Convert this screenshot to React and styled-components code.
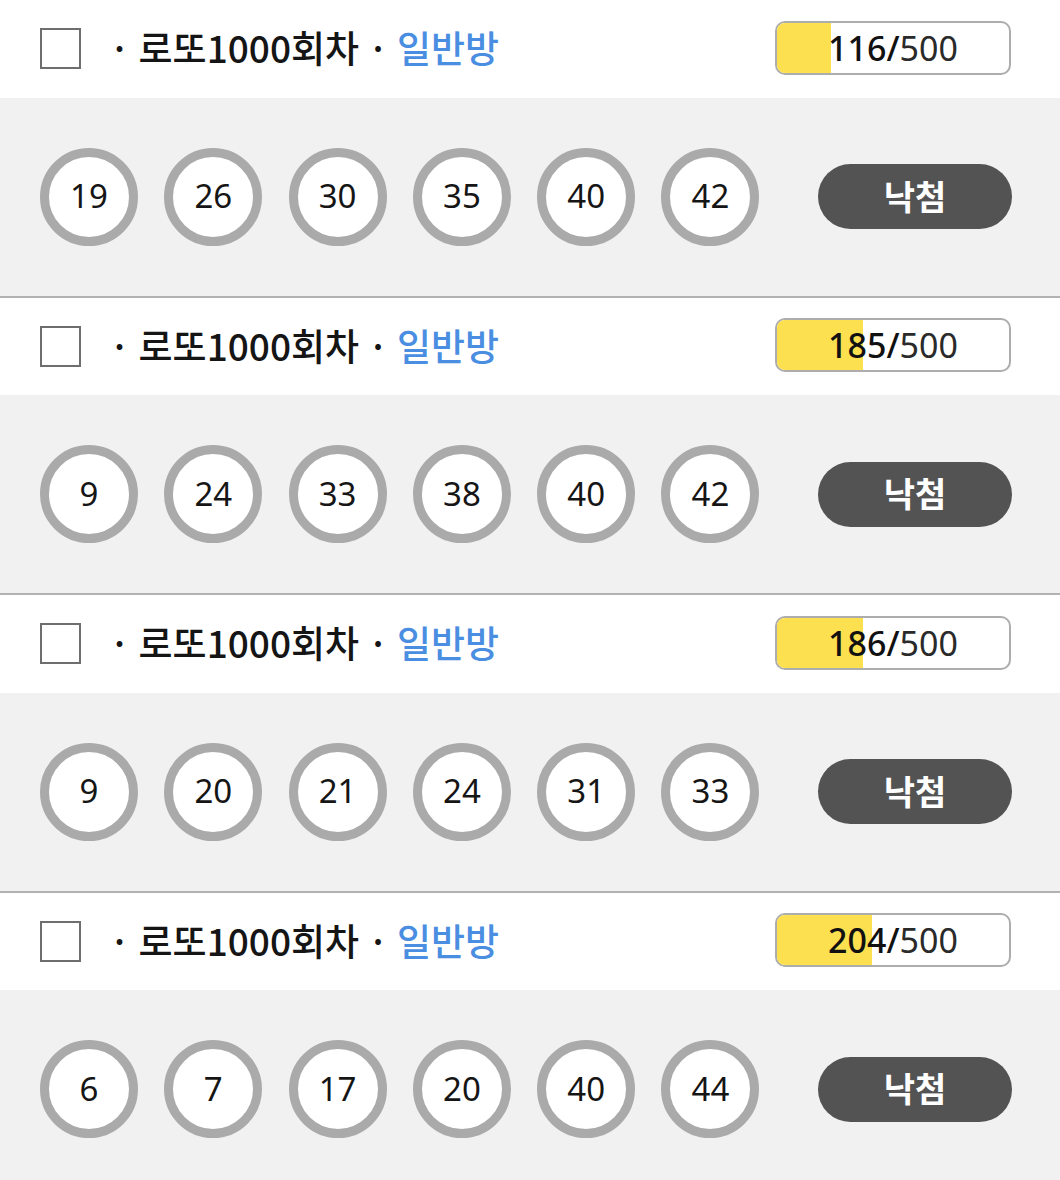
import React from 'react'
import styled, { createGlobalStyle } from 'styled-components'

const GlobalStyle = createGlobalStyle`
  html, body {
    margin: 0;
    padding: 0;
    background: #fff;
    font-family: "Noto Sans", "Noto Sans CJK KR", sans-serif;
  }
`;

const List = styled.div`
  width: 1060px;
`;

const Ticket = styled.section`
  border-bottom: 2px solid #b2b2b2;
`;

const Header = styled.div`
  height: 97.5px;
  display: flex;
  align-items: center;
  padding: 0 49px 0 40px;
  background: #fff;
`;

const Check = styled.span`
  width: 41px;
  height: 41px;
  box-sizing: border-box;
  border: 2.5px solid #6e6e6e;
  background: #fff;
  flex: none;
`;

const Title = styled.div`
  margin-left: 28px;
  margin-top: -3px;
  font-family: "Noto Sans CJK KR", "Noto Sans", sans-serif;
  font-size: 37px;
  font-weight: 500;
  color: #151515;
  white-space: nowrap;
  flex: 1;
`;

const Room = styled.span`
  color: #4a8ee2;
`;

const Gauge = styled.div`
  position: relative;
  width: 236px;
  height: 54px;
  box-sizing: border-box;
  border: 2px solid #adadad;
  border-radius: 10px;
  overflow: hidden;
  display: flex;
  align-items: center;
  justify-content: center;
  background: #fff;
  margin-top: -2px;
`;

const Fill = styled.div`
  position: absolute;
  left: 0;
  top: 0;
  bottom: 0;
  background: #fde04f;
`;

const Count = styled.span`
  position: relative;
  font-size: 34px;
  color: #111;
  font-weight: 500;
  line-height: 1;
`;

const Max = styled.span`
  font-weight: 400;
  color: #2a2a2a;
`;

const Body = styled.div`
  height: 198px;
  background: #f1f1f1;
  display: flex;
  align-items: center;
  padding: 0 48px 0 40px;
`;

const Balls = styled.div`
  display: flex;
  gap: 26.3px;
  flex: 1;
`;

const Ball = styled.div`
  width: 98px;
  height: 98px;
  box-sizing: border-box;
  border: 9px solid #aaaaaa;
  border-radius: 50%;
  background: #fff;
  display: flex;
  align-items: center;
  justify-content: center;
  font-size: 33px;
  color: #151515;
  padding-bottom: 2px;
`;

const Result = styled.button`
  width: 194px;
  height: 65px;
  border: none;
  border-radius: 33px;
  background: #535353;
  color: #fff;
  font-family: "Noto Sans CJK KR", sans-serif;
  font-size: 34px;
  font-weight: 700;
  padding: 0 0 3px;
`;

const tickets = [
  { count: 116, balls: [19, 26, 30, 35, 40, 42] },
  { count: 185, balls: [9, 24, 33, 38, 40, 42] },
  { count: 186, balls: [9, 20, 21, 24, 31, 33] },
  { count: 204, balls: [6, 7, 17, 20, 40, 44] },
];

const App = () => {
  return (
    <List>
      <GlobalStyle />
      {tickets.map((t, i) => (
        <Ticket key={i}>
          <Header>
            <Check />
            <Title>
              · 로또1000회차 · <Room>일반방</Room>
            </Title>
            <Gauge>
              <Fill style={{ width: `${(t.count / 500) * 100}%` }} />
              <Count>
                {t.count}/<Max>500</Max>
              </Count>
            </Gauge>
          </Header>
          <Body>
            <Balls>
              {t.balls.map(n => <Ball key={n}>{n}</Ball>)}
            </Balls>
            <Result>낙첨</Result>
          </Body>
        </Ticket>
      ))}
    </List>
  )
}

export default App
